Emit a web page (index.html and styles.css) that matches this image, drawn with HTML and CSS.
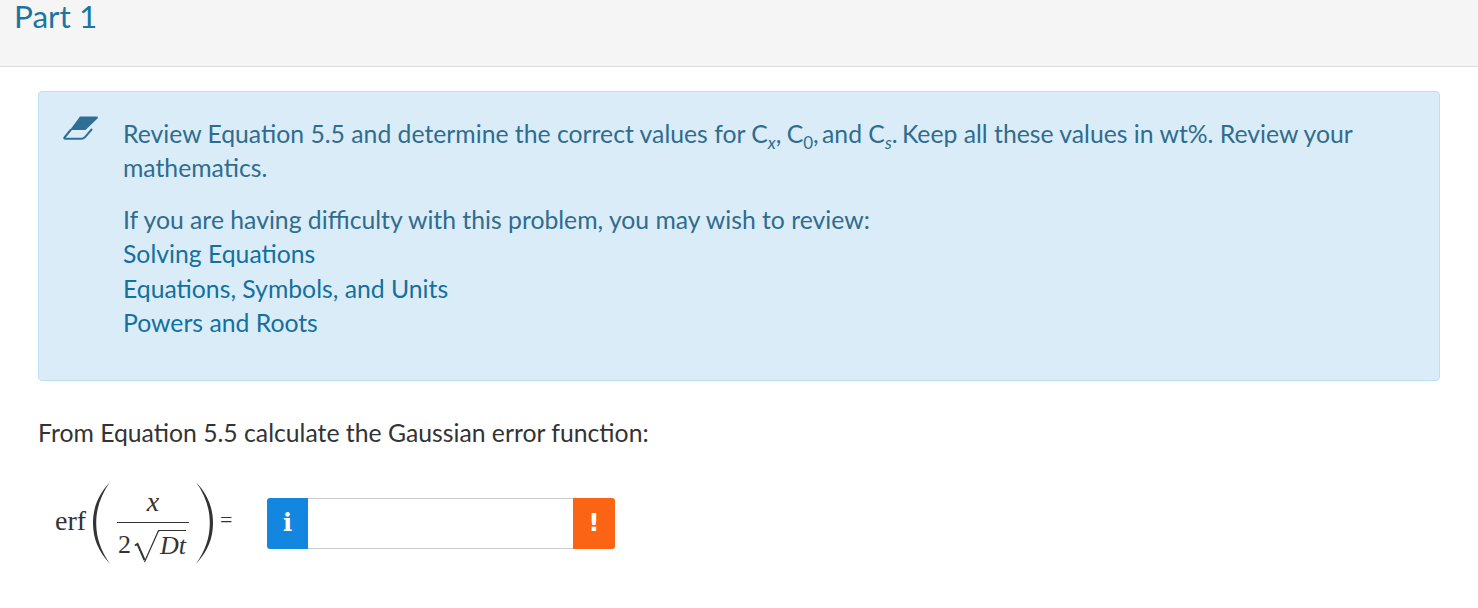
FILE: index.html
```html
<!DOCTYPE html>
<html lang="en">
<head>
<meta charset="utf-8">
<title>Part 1</title>
<link rel="stylesheet" href="styles.css">
</head>
<body>
<header class="part-header"><h2 class="part-title">Part 1</h2></header>
<main class="content">
  <section class="hint">
    <svg class="hint-icon" width="35" height="24" viewBox="0 0 35 24">
      <path d="M17 .5H33.500C35 .5 35.300 1.500 34.500 2.500L22.500 14H7Z" fill="#2f6f96"/>
      <path d="M8 13.500L1.500 21.500C1 22.300 1.300 22.800 2.500 22.800H18.500C20 22.800 20.800 22.300 21.800 21.300L29 13" fill="none" stroke="#2f6f96" stroke-width="2" stroke-linejoin="round"/>
    </svg>
    <div class="hint-body">
      <p class="hint-par">Review Equation 5.5 and determine the correct values for C<sub>x</sub><span class="gap-narrow">, </span>C<sub class="upright">0</sub><span class="gap-narrowest">, </span>and C<sub>s</sub><span class="gap-narrower">. </span>Keep all these values in wt%. Review your mathematics.</p>
      <p class="hint-par">If you are having difficulty with this problem, you may wish to review:<br>
      <a class="hint-link">Solving Equations</a><br>
      <a class="hint-link">Equations, Symbols, and Units</a><br>
      <a class="hint-link">Powers and Roots</a></p>
    </div>
  </section>
  <p class="prompt">From Equation 5.5 calculate the Gaussian error function:</p>
  <div class="equation">
    <div class="math">
      <span class="erf">erf</span>
      <svg class="paren" width="20" height="84" viewBox="0 0 20 84"><path d="M18 1C6 14 1 27 1 42C1 57 6 70 18 83C9 70 4.200 57 4.200 42C4.200 27 9 14 18 1Z" fill="#333"/></svg>
      <div class="fraction">
        <span class="numerator">x</span>
        <span class="denominator"><span class="digit">2</span><svg class="radical" width="26" height="33" viewBox="0 0 26 33"><path d="M1 15.500L3.500 14L10.500 30" fill="none" stroke="#333" stroke-width="2"/><path d="M10.500 32L24.500 .7H26" fill="none" stroke="#333" stroke-width="1.200"/></svg><span class="radicand">Dt</span></span>
      </div>
      <svg class="paren" width="20" height="84" viewBox="0 0 20 84"><path d="M2 1C14 14 19 27 19 42C19 57 14 70 2 83C11 70 15.800 57 15.800 42C15.800 27 11 14 2 1Z" fill="#333"/></svg>
      <span class="equals">=</span>
    </div>
    <div class="answer">
      <span class="addon addon-info">i</span>
      <span class="answer-field"></span>
      <span class="addon addon-warn">!</span>
    </div>
  </div>
</main>
</body>
</html>
```
FILE: styles.css
```css
* { box-sizing: border-box; }
html, body { margin: 0; padding: 0; }
body {
  background: #fff;
  font-family: Lato, "Open Sans", sans-serif;
  font-size: 24.75px;
  line-height: 34.4px;
  color: #333;
  height: 608px;
  overflow: hidden;
}
.part-header {
  height: 67px;
  background: #f5f5f5;
  border-bottom: 1px solid #ddd;
  padding-left: 14px;
}
.part-title {
  margin: 0;
  font-size: 31.5px;
  font-weight: 400;
  line-height: 33px;
  color: #1a75a3;
}
.content { padding: 24px 38px 0; }
.hint {
  display: flex;
  width: 1402px;
  height: 290px;
  padding: 24px 24px 0 24px;
  background: #daecf8;
  border: 1px solid #bce0f1;
  border-radius: 4px;
  color: #2f6c8e;
}
.hint-icon { flex: none; margin-right: 25px; }
.hint-body { flex: 1; padding-top: 1px; }
.hint-par { margin: 0 0 17px; }
.hint-par sub { font-size: 17px; line-height: 0; font-style: italic; }
.hint-par sub.upright { font-style: normal; }
.gap-narrow { word-spacing: -1px; }
.gap-narrower { word-spacing: -2px; }
.gap-narrowest { word-spacing: -3px; }
.hint-link { color: #14709f; }
.prompt { margin: 35px 0 0; }
.equation { display: flex; align-items: center; margin-top: 31px; height: 84px; }
.math {
  display: flex;
  align-items: center;
  flex: none;
  width: 229px;
  height: 84px;
  padding-left: 17px;
  font-family: "Liberation Serif", serif;
  color: #333;
}
.erf { font-size: 28px; margin-right: 6px; margin-top: -4px; }
.fraction {
  display: flex;
  flex-direction: column;
  width: 72px;
  height: 84px;
  margin: 0 5px;
}
.numerator {
  font-size: 28px;
  line-height: 41px;
  height: 42px;
  font-style: italic;
  text-align: center;
  border-bottom: 1.5px solid #333;
}
.denominator {
  display: flex;
  align-items: flex-start;
  font-size: 26px;
  line-height: 29px;
  margin-top: 7px;
  padding-left: 1px;
}
.radical { flex: none; margin-left: 3px; }
.radicand { font-style: italic; border-top: 1.2px solid #333; }
.equals { font-size: 22px; margin-left: 6px; margin-top: -6px; }
.answer { display: flex; flex: none; height: 51px; width: 348px; }
.addon {
  flex: none;
  display: flex;
  align-items: center;
  justify-content: center;
  color: #fff;
  font-weight: 700;
}
.addon-info {
  width: 41px;
  background: #1387e0;
  border-radius: 3px 0 0 3px;
  font-family: "DejaVu Serif", serif;
  font-size: 24px;
}
.addon-warn {
  width: 42px;
  background: #fb6414;
  border-radius: 0 3px 3px 0;
  font-family: "DejaVu Sans", sans-serif;
  font-size: 25px;
}
.answer-field {
  flex: 1;
  background: #fff;
  border-top: 1px solid #ccc;
  border-bottom: 1px solid #ccc;
}
```
